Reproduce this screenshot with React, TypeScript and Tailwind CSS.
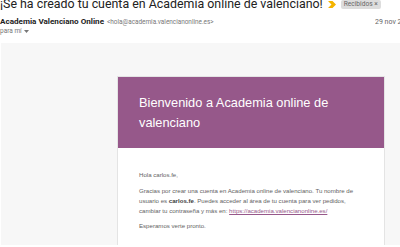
function ImportantMarker() {
  return (
    <svg width="8" height="7" viewBox="0 0 8 7" className="shrink-0">
      <path d="M0 0h4.5L8 3.5 4.5 7H0l3.5-3.5z" fill="#f4b400" />
    </svg>
  );
}

export default function App() {
  return (
    <div className="w-[400px] h-[247px] overflow-hidden bg-white font-['Roboto',sans-serif]">
      {/* mail header */}
      <div className="h-[43px] overflow-hidden">
        <div className="flex items-center gap-[5px] mt-[-4px] h-[16px] whitespace-nowrap">
          <h1 className="text-[12.4px] leading-[16px] text-[#222]">
            ¡Se ha creado tu cuenta en Academia online de valenciano!
          </h1>
          <ImportantMarker />
          <span className="bg-[#ddd] text-[#666] text-[6.6px] leading-[9px] px-[3px] rounded-[2px] mt-[1px]">
            Recibidos ×
          </span>
        </div>
        <div className="flex items-end mt-[5px] h-[10px]">
          <div className="flex-1 flex items-baseline gap-[3px] whitespace-nowrap">
            <span className="text-[8.1px] font-bold text-[#222] leading-[10px]">
              Academia Valenciano Online
            </span>
            <span className="text-[6.4px] text-[#777] leading-[10px]">
              &lt;hola@academia.valencianonline.es&gt;
            </span>
          </div>
          <div className="w-[25px] overflow-hidden whitespace-nowrap text-[7px] text-[#666] leading-[10px]">
            29 nov 2020
          </div>
        </div>
        <div className="flex items-center gap-[2px] text-[6.5px] text-[#777] leading-[8px]">
          para mí
          <svg width="5" height="3" viewBox="0 0 5 3">
            <path d="M0 0h5L2.5 3z" fill="#777" />
          </svg>
        </div>
      </div>

      {/* mail body */}
      <div className="ml-[1px] h-[202px] bg-[#f7f7f7] overflow-hidden pt-[33px] pl-[116px]">
        <div className="w-[268px] bg-white border border-[#e4e4e4] font-['Liberation_Sans',sans-serif]">
          <div className="bg-[#96588a] h-[71px] pl-[21px] pr-[20px] pt-[16px]">
            <h2 className="text-white text-[12.8px] leading-[20px]">
              Bienvenido a Academia online de valenciano
            </h2>
          </div>
          <div className="px-[21px] pt-[22px] pb-[20px] text-[#636363] text-[6.1px] leading-[10px]">
            <p className="mb-[6px]">Hola carlos.fe,</p>
            <p className="mb-[5px]">
              Gracias por crear una cuenta en Academia online de valenciano. Tu nombre de usuario es{" "}
              <b className="text-[#3c3c3c]">carlos.fe</b>. Puedes acceder al área de tu cuenta para ver pedidos,
              cambiar tu contraseña y más en:{" "}
              <a className="text-[#96588a] underline">https://academia.valencianonline.es/</a>
            </p>
            <p>Esperamos verte pronto.</p>
          </div>
        </div>
      </div>
    </div>
  );
}
